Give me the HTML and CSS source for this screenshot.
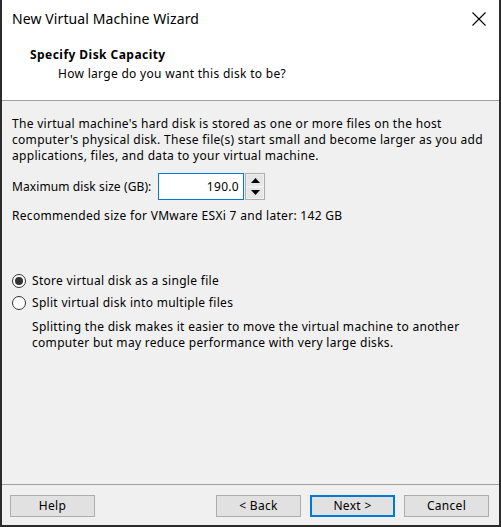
FILE: index.html
```html
<!DOCTYPE html>
<html lang="en">
<head>
	<meta charset="UTF-8">
	<meta name="viewport" content="width=device-width, initial-scale=1.0">
	<link rel="stylesheet" href="styles.css">
	<title>New Virtual Machine Wizard</title>
</head>
<body>
	<div class="window">
		<div class="head">
			<div class="titlebar">
				<span class="title">New Virtual Machine Wizard</span>
				<svg class="close" width="16" height="16" viewBox="0 0 16 16" aria-hidden="true">
					<path d="M1.5 1.5 L14.5 14.5 M14.5 1.5 L1.5 14.5" stroke="#000" stroke-width="1.1" fill="none"/>
				</svg>
			</div>
			<h1 class="step">Specify Disk Capacity</h1>
			<p class="sub">How large do you want this disk to be?</p>
		</div>

		<div class="body">
			<p class="intro">The virtual machine's hard disk is stored as one or more files on the host computer's physical disk. These file(s) start small and become larger as you add applications, files, and data to your virtual machine.</p>

			<div class="size-row">
				<label for="size">Maximum disk size (GB):</label>
				<input id="size" class="size" type="text" value="190.0">
				<div class="spin">
					<span class="spin-btn"><svg width="9" height="5" viewBox="0 0 9 5"><path d="M4.5 0 L9 5 L0 5 Z" fill="#000"/></svg></span>
					<span class="spin-btn"><svg width="9" height="5" viewBox="0 0 9 5"><path d="M0 0 L9 0 L4.5 5 Z" fill="#000"/></svg></span>
				</div>
			</div>

			<p class="rec">Recommended size for VMware ESXi 7 and later: 142 GB</p>

			<div class="choices">
				<label class="radio"><span class="dot on"></span>Store virtual disk as a single file</label>
				<label class="radio"><span class="dot"></span>Split virtual disk into multiple files</label>
				<p class="note">Splitting the disk makes it easier to move the virtual machine to another computer but may reduce performance with very large disks.</p>
			</div>
		</div>

		<div class="foot">
			<button class="btn">Help</button>
			<div class="nav">
				<button class="btn">&lt; Back</button>
				<button class="btn default">Next &gt;</button>
				<button class="btn">Cancel</button>
			</div>
		</div>
	</div>
</body>
</html>
```

FILE: styles.css
```css
* {
  margin: 0;
  padding: 0;
  box-sizing: border-box;
}
html, body {
  height: 100%;
}
body {
  background: #2b2b2b;
  font: 12px/16px "Noto Sans", "Open Sans", sans-serif;
  letter-spacing: 0.3px;
  color: #000;
  overflow: hidden;
}
.window {
  display: flex;
  flex-direction: column;
  margin-left: 2px;
  width: 497px;
  height: 525px;
  background: #f0f0f0;
}
.head {
  background: #fff;
  height: 101px;
  border-bottom: 1px solid #a0a0a0;
}
.titlebar {
  display: flex;
  align-items: center;
  justify-content: space-between;
  height: 37px;
  padding: 0 12px 0 10px;
}
.title {
  font-size: 14px;
  letter-spacing: 0.1px;
}
.close {
  margin-top: 1px;
}
.step {
  margin: 10px 0 0 28px;
  font-size: 12px;
  font-weight: 700;
  line-height: 16px;
  letter-spacing: 0.45px;
}
.sub {
  margin: 3px 0 0 56px;
}
.body {
  flex: 1;
  padding: 15px 10px 0;
}
.intro {
  width: 478px;
}
.size-row {
  display: flex;
  align-items: center;
  margin-top: 9px;
}
.size-row label {
  width: 146px;
  letter-spacing: 0.1px;
}
.size {
  width: 86px;
  height: 27px;
  border: 1px solid #0078d7;
  padding: 0 4px;
  font: inherit;
  letter-spacing: inherit;
  text-align: right;
  outline: none;
}
.spin {
  display: flex;
  flex-direction: column;
  margin-left: 1px;
  width: 20px;
  height: 27px;
  border: 1px solid #adadad;
}
.spin-btn {
  display: flex;
  align-items: center;
  justify-content: center;
  flex: 1;
  background: #e5e5e5;
  border: 1px solid #f0f0f0;
}
.rec {
  margin-top: 8px;
}
.choices {
  display: flex;
  flex-direction: column;
  gap: 6px;
  margin-top: 49px;
}
.radio {
  display: flex;
  align-items: center;
  gap: 6px;
}
.dot {
  position: relative;
  width: 14px;
  height: 14px;
  border: 1px solid #333;
  border-radius: 50%;
  background: #fff;
}
.dot.on::after {
  content: '';
  position: absolute;
  inset: 2px;
  border-radius: 50%;
  background: #333;
}
.note {
  margin: 2px 0 0 20px;
  width: 450px;
}
.foot {
  display: flex;
  justify-content: space-between;
  align-items: flex-start;
  height: 41px;
  border-top: 1px solid #a0a0a0;
  padding: 10px 10px 0 8px;
}
.nav {
  display: flex;
  gap: 9px;
}
.btn {
  width: 85px;
  height: 22px;
  border: 1px solid #adadad;
  background: #e1e1e1;
  font: inherit;
  letter-spacing: inherit;
  color: #000;
}
.btn.default {
  border: 2px solid #0078d7;
}
```
